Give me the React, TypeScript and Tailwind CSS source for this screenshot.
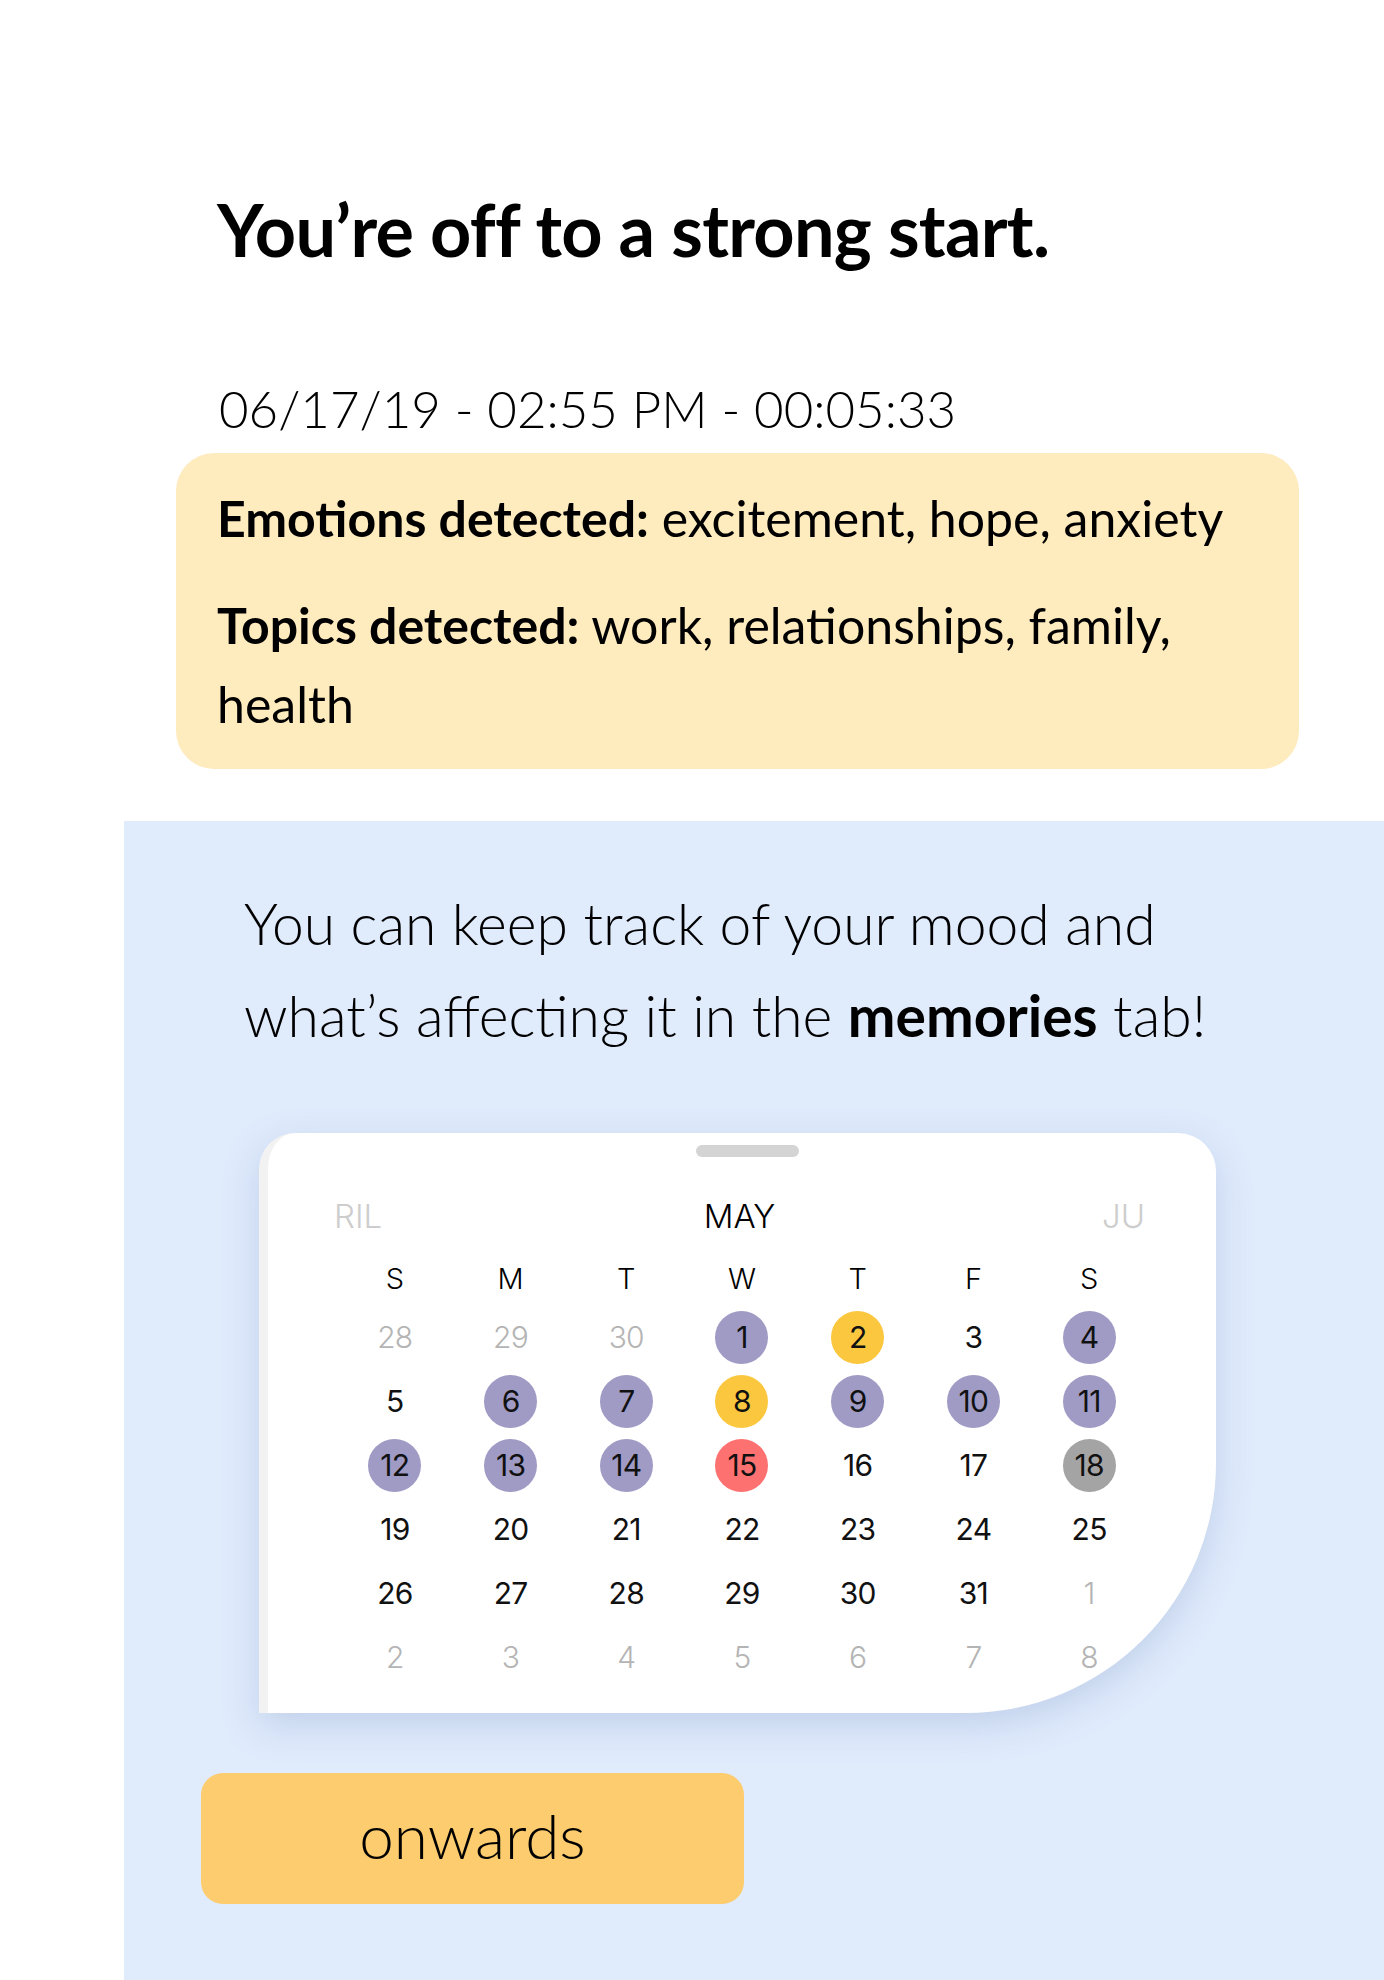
import React from 'react';

type Day = { n: number; tone?: 'purple' | 'yellow' | 'red' | 'gray'; dim?: boolean };

const weeks: Day[][] = [
  [{ n: 28, dim: true }, { n: 29, dim: true }, { n: 30, dim: true }, { n: 1, tone: 'purple' }, { n: 2, tone: 'yellow' }, { n: 3 }, { n: 4, tone: 'purple' }],
  [{ n: 5 }, { n: 6, tone: 'purple' }, { n: 7, tone: 'purple' }, { n: 8, tone: 'yellow' }, { n: 9, tone: 'purple' }, { n: 10, tone: 'purple' }, { n: 11, tone: 'purple' }],
  [{ n: 12, tone: 'purple' }, { n: 13, tone: 'purple' }, { n: 14, tone: 'purple' }, { n: 15, tone: 'red' }, { n: 16 }, { n: 17 }, { n: 18, tone: 'gray' }],
  [{ n: 19 }, { n: 20 }, { n: 21 }, { n: 22 }, { n: 23 }, { n: 24 }, { n: 25 }],
  [{ n: 26 }, { n: 27 }, { n: 28 }, { n: 29 }, { n: 30 }, { n: 31 }, { n: 1, dim: true }],
  [{ n: 2, dim: true }, { n: 3, dim: true }, { n: 4, dim: true }, { n: 5, dim: true }, { n: 6, dim: true }, { n: 7, dim: true }, { n: 8, dim: true }],
];

const toneClass = {
  purple: 'bg-[#9f9bc5]',
  yellow: 'bg-[#fbc73f]',
  red: 'bg-[#fd7271]',
  gray: 'bg-[#a4a4a4]',
};

const CalendarCard: React.FC = () => (
  <div className="ml-[135px] w-[957px] h-[580px] bg-white border-l-[9px] border-l-[#f2f2f2] rounded-tl-[36px] rounded-tr-[38px] rounded-br-[250px] shadow-[0_12px_36px_rgba(110,140,190,0.28)] flex flex-col font-['Inter',sans-serif] pt-[12px]">
    <div className="mx-auto w-[103px] h-[12px] rounded-full bg-[#d4d4d4] translate-x-[5px]" />
    <div className="mt-[40px] h-[40px] flex items-center justify-between pl-[66px] pr-[71px] text-[33px] font-light">
      <span className="text-[#cdcdcd] w-[120px]">RIL</span>
      <span className="text-black">MAY</span>
      <span className="text-[#cdcdcd] w-[120px] text-right">JU</span>
    </div>
    <div className="mt-[20px] ml-[69px] w-[810px] grid grid-cols-7 h-[40px] items-center text-[29px] font-light text-black">
      {['S', 'M', 'T', 'W', 'T', 'F', 'S'].map((d, i) => (
        <span key={i} className="text-center">{d}</span>
      ))}
    </div>
    <div className="mt-[8px] ml-[69px] w-[810px] flex flex-col">
      {weeks.map((week, wi) => (
        <div key={wi} className="grid grid-cols-7 h-[64px]">
          {week.map((day, di) => (
            <div key={di} className="flex items-center justify-center">
              <span
                className={`w-[53px] h-[53px] rounded-full flex items-center justify-center text-[30px] tracking-tight ${
                  day.tone ? toneClass[day.tone] : ''
                } ${day.dim ? 'text-[#b4b4b4] font-light' : 'text-[#111]'}`}
              >
                {day.n}
              </span>
            </div>
          ))}
        </div>
      ))}
    </div>
  </div>
);

export default function App() {
  return (
    <div className="w-[1384px] h-[1980px] bg-white flex flex-col font-['Lato',sans-serif] text-black overflow-hidden">
      <div className="pl-[176px] pr-[85px]">
        <h1 className="pl-[41px] mt-[193px] text-[72px] leading-[72px] font-bold tracking-[-0.01em] whitespace-nowrap">
          You’re off to a strong start.
        </h1>
        <p className="pl-[43px] mt-[118px] text-[51px] leading-[51px] font-light whitespace-nowrap">
          06/17/19 - 02:55 PM - 00:05:33
        </p>
        <div className="mt-[19px] bg-[#feebbe] rounded-[38px] pl-[41px] pr-[40px] pt-[26px] pb-[25px] text-[50px] leading-[79px]">
          <p className="whitespace-nowrap">
            <span className="font-bold">Emotions detected:</span> excitement, hope, anxiety
          </p>
          <p className="mt-[28px]">
            <span className="font-bold">Topics detected:</span> work, relationships, family,
            <br />
            health
          </p>
        </div>
      </div>

      <div className="ml-[124px] mt-[52px] flex-1 bg-[#e0ebfc] flex flex-col">
        <p className="pl-[120px] pt-[56px] text-[57px] leading-[92px] font-light whitespace-nowrap">
          You can keep track of your mood and
          <br />
          what’s affecting it in the <span className="font-bold">memories</span> tab!
        </p>
        <div className="mt-[72px]">
          <CalendarCard />
        </div>
        <button className="ml-[77px] mt-[60px] w-[543px] h-[131px] rounded-[22px] bg-[#fdcc6e] text-[62px] font-light text-black flex items-center justify-center pb-[6px]">
          onwards
        </button>
      </div>
    </div>
  );
}
